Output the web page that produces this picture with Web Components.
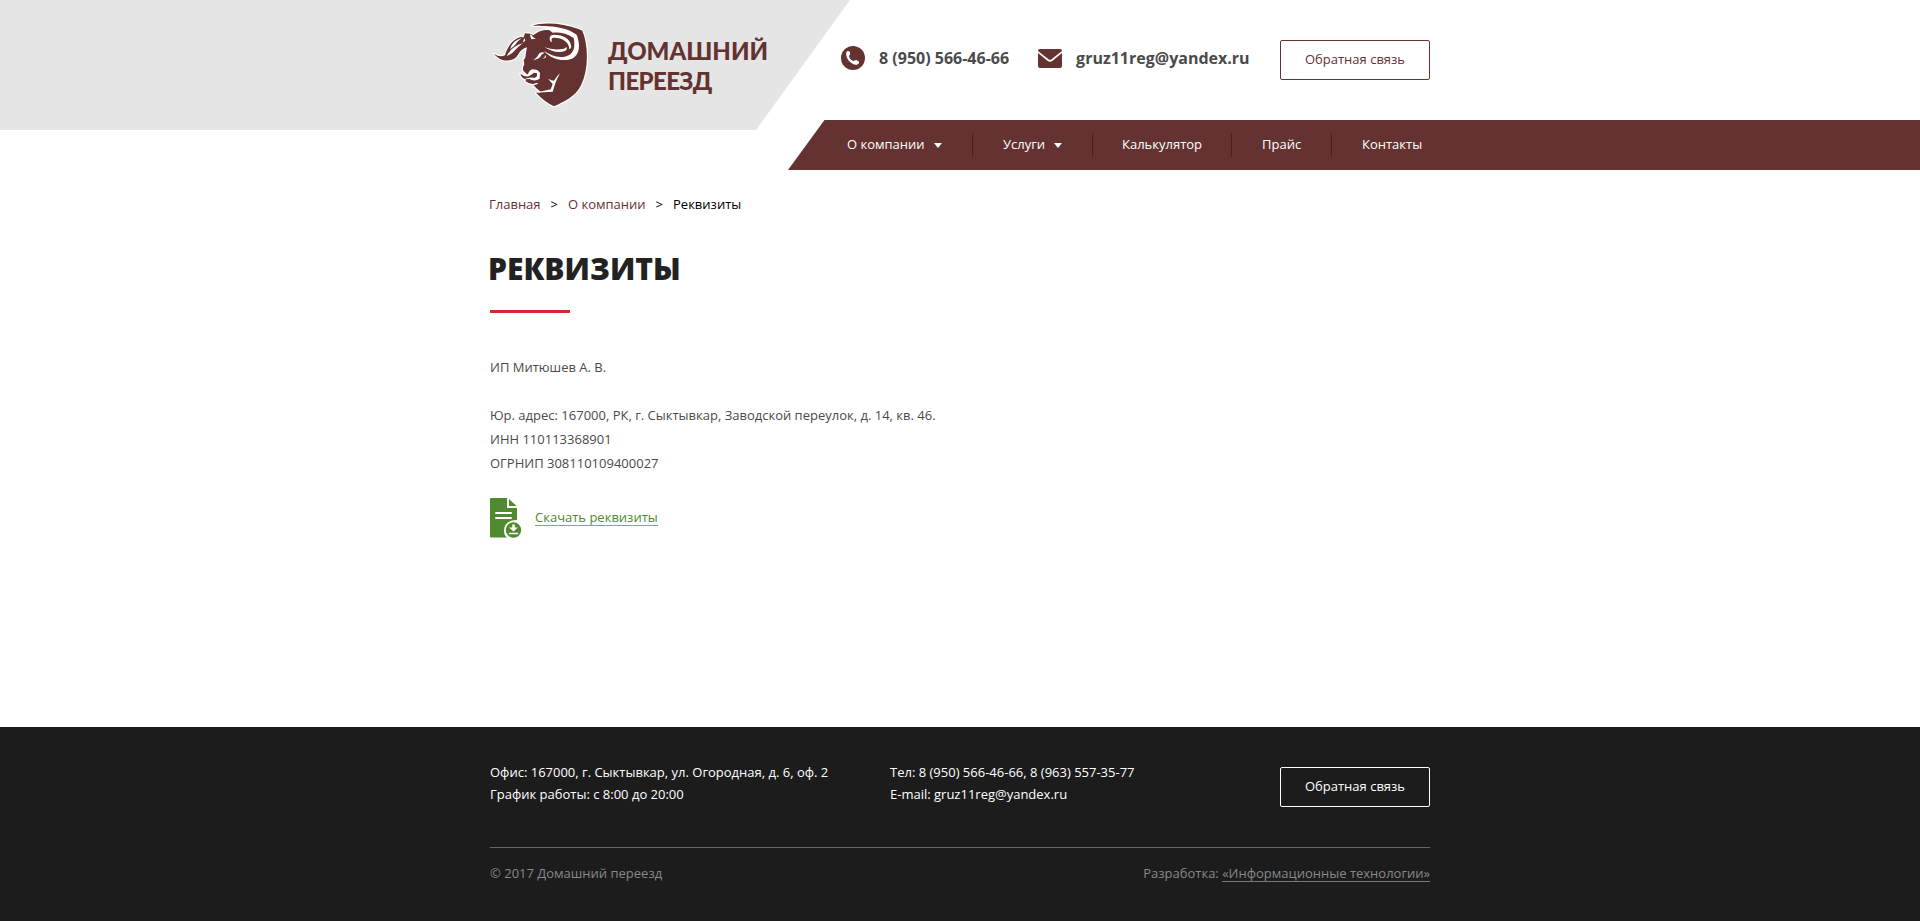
<!DOCTYPE html>
<html lang="ru">
<head>
<meta charset="utf-8">
<title>Реквизиты</title>
<style>
body{margin:0;background:#fff;font:13px/24px "Open Sans","Noto Sans",sans-serif;color:#4a4a4a}
</style>
</head>
<body>
<site-page></site-page>
<script>
const define=(name,html)=>customElements.define(name,class extends HTMLElement{
  constructor(){super();this.attachShadow({mode:'open'}).innerHTML=html;}
});

define('bull-logo',`<style>:host{display:block;width:110px;height:110px}svg{display:block}</style>
<svg width="110" height="110" viewBox="30 0 330 330">
<g fill="#633231" stroke="#fff" stroke-width="7" stroke-linejoin="round" paint-order="stroke">
<path d="M156 47C190 35 250 39 296 57L307 62Q313 75 317 97C325 143 320 190 303 226C287 260 250 277 222 289Q193 275 168 248L184 247Q168 236 158 222Q144 220 136 213L139 209Q124 204 121 192L136 197L142 194L130 182Q127 174 133 163L131 149Q138 145 137 133L141 112Q124 116 114 134C101 157 63 159 42 131Q59 143 75 136C82 110 99 86 124 80L130 83L135 70L152 71L160 76Q183 56 213 61L217 66L222 58C202 46 176 47 156 47Z"/>
</g>
<g fill="#fff">
<path d="M176 48C220 46 264 54 290 74C302 104 300 134 276 146C250 156 212 148 192 122Q216 140 242 141C278 141 288 118 281 84C262 70 238 66 218 68Q200 52 176 48Z"/>
<path d="M211 94Q204 74 222 74C250 74 272 86 274 110Q272 116 268 118C268 96 246 82 220 83Q212 84 216 96Z"/>
<path d="M194 112Q222 122 252 116Q258 114 258 110Q264 116 256 122Q230 134 194 112Z"/>
<path d="M90 118Q96 92 126 84Q110 94 104 106Q98 112 90 118ZM80 138Q96 108 128 100Q112 112 100 126Q92 134 80 138Z"/>
<path d="M154 88Q148 78 152 70Q158 84 168 86ZM133 84L128 98L136 92Z"/>
<path d="M160 150Q172 144 178 130Q186 124 194 128Q184 132 180 142Q172 150 160 150ZM188 146Q196 142 196 134Q202 144 188 146Z"/>
<path d="M121 190Q134 196 144 192Q148 180 158 178L172 180L180 188L179 206Q164 216 148 207L132 208Q150 200 164 204L171 198V190L162 188Q152 196 146 199Q132 202 121 190Z"/>
<path d="M158 222L172 218L174 222L160 226ZM166 248L212 238L218 222L204 206Q216 212 222 212Q230 198 240 190Q230 208 226 220L218 245Z"/>
</g>
</svg>`);

define('site-brand',`<style>
:host{display:flex;align-items:flex-start;height:130px}
.n{margin:36px 0 0 8px;font:900 24px/30px Lato,sans-serif;color:#633231;white-space:nowrap}
.n span{display:block}.b{letter-spacing:-.6px}
bull-logo{margin-top:10px}
</style><bull-logo></bull-logo><div class="n"><span class="a">ДОМАШНИЙ</span><span class="b">ПЕРЕЕЗД</span></div>`);

define('outline-button',`<style>
:host{display:block;box-sizing:border-box;width:150px;height:40px;border:1px solid currentColor;border-radius:2px;text-align:center;line-height:36px;font-size:13px;white-space:nowrap}
</style><slot></slot>`);

define('contact-item',`<style>
:host{display:flex;align-items:center;height:40px;font-weight:700;font-size:16px;line-height:40px;color:#4a4a4a;white-space:nowrap}
::slotted(svg){display:block;margin-right:14px;flex:none}
</style><slot name="icon"></slot><slot></slot>`);

define('nav-item',`<style>
:host{display:flex;align-items:center;height:24px;padding-left:30px;box-sizing:border-box;border-right:1px solid #4f1d1d;color:#fff;white-space:nowrap}
:host([last]){border:0}
span{line-height:22px;height:24px}
i{display:none;margin:1px 0 0 9px;border:4px solid transparent;border-top:5px solid #fff;border-bottom:0}
:host([menu]) i{display:block}
</style><span><slot></slot></span><i></i>`);

define('site-header',`<style>
:host{display:grid;grid-template-columns:490px 298px 1fr;grid-template-rows:120px 50px;height:170px}
.brand{grid-area:1/1/3/3;height:130px;width:850px;box-sizing:border-box;padding-left:490px;background:#e5e5e5;clip-path:polygon(0 0,850px 0,756px 130px,0 130px)}
.top{grid-area:1/3;display:flex;align-items:flex-start;padding:38px 0 0 53px;width:589px}
.top contact-item + contact-item{margin-left:29px}
.top outline-button{margin:2px 0 0 auto;color:#633231}
nav{grid-area:2/3;display:flex;align-items:center;padding-left:29px;background:#633231;clip-path:polygon(36.5px 0,100% 0,100% 100%,0 100%)}
</style>
<div class="brand"><site-brand></site-brand></div>
<div class="top">
<contact-item><svg slot="icon" width="24" height="24" viewBox="0 0 24 24"><circle cx="12" cy="12" r="12" fill="#633231"/><path fill="#fff" d="M5.3 6.2Q6.2 4.8 7.7 5.2L8.7 5.6Q9.6 7.6 9 8.6L8 10Q8.4 13.3 12.2 15.1L14.4 14.2Q15.2 13.8 16.2 14.4L18 15.6Q18.8 17.6 16.4 18.5C11.2 20 4 12.5 5.3 6.2Z"/></svg>8 (950) 566-46-66</contact-item>
<contact-item><svg slot="icon" width="24" height="19" viewBox="0 0 24 19"><path fill="#633231" d="M2 0H22Q24 0 24 2L13.5 10.2Q12 11.2 10.5 10.2L0 2Q0 0 2 0ZM0 4L9.7 12Q12 13.6 14.3 12L24 4V17Q24 19 22 19H2Q0 19 0 17Z"/></svg>gruz11reg@yandex.ru</contact-item>
<outline-button>Обратная связь</outline-button>
</div>
<nav>
<nav-item menu style="width:156px">О компании</nav-item><nav-item menu style="width:120px">Услуги</nav-item><nav-item style="width:139px;padding-left:29px">Калькулятор</nav-item><nav-item style="width:100px">Прайс</nav-item><nav-item last>Контакты</nav-item>
</nav>`);

define('bread-crumbs',`<style>
:host{display:flex;gap:10px;line-height:18px;color:#000}
a{color:#633231}
</style><a>Главная</a><span>&gt;</span><a>О компании</a><span>&gt;</span><span>Реквизиты</span>`);

define('page-title',`<style>
:host{display:block}
h1{margin:0 0 0 -2px;font-size:30px;line-height:40px;font-weight:800;color:#222;white-space:nowrap}
hr{margin:21px 0 0;border:0;width:80px;height:3px;background:#d32b2f}
</style><h1><slot></slot></h1><hr>`);

define('download-link',`<style>
:host{display:flex;align-items:flex-start}
svg{display:block;margin-right:13px}
a{color:#4f8a2f;border-bottom:1px solid #82ad6c;line-height:16px;margin-top:11px}
</style><svg width="32" height="40" viewBox="0 0 32 40"><path fill="#4f8a2f" d="M1 0H17V10H27V22Q14 22 14 33Q14 37 17 39.5H1Q0 39.5 0 38.5V1Q0 0 1 0ZM19 1L26.5 8H19Z"/><path stroke="#fff" stroke-width="2" stroke-linecap="round" d="M6 15H21M6 20H21"/><circle cx="23.5" cy="32" r="7.7" fill="#4f8a2f"/><path fill="#fff" d="M22.2 26.5H24.8V29.5H28L23.5 33.5L19 29.5H22.2Z"/><path fill="none" stroke="#fff" stroke-width="1.6" stroke-linecap="round" d="M19.5 35.5H27.5"/></svg><a><slot></slot></a>`);

define('site-footer',`<style>
:host{display:block;background:#1c1c1c;height:194px;color:#fff}
.w{width:940px;margin:0 auto;padding-top:34px}
.r{display:grid;grid-template-columns:400px 1fr 150px;line-height:22px;height:86px;border-bottom:1px solid #666}
outline-button{margin-top:6px}
.c{display:flex;justify-content:space-between;line-height:18px;padding-top:16px;color:#888}
.c a{display:inline-block;line-height:15px;border-bottom:1px solid #777}
</style><div class="w"><div class="r"><div>Офис: 167000, г. Сыктывкар, ул. Огородная, д. 6, оф. 2<br>График работы: с 8:00 до 20:00</div><div>Тел: 8 (950) 566-46-66, 8 (963) 557-35-77<br>E-mail: gruz11reg@yandex.ru</div><outline-button>Обратная связь</outline-button></div>
<div class="c"><span>© 2017 Домашний переезд</span><span>Разработка: <a>«Информационные технологии»</a></span></div></div>`);

define('site-page',`<style>
:host{display:flex;flex-direction:column;height:921px;overflow:hidden}
main{width:940px;margin:0 auto;flex:1}
bread-crumbs{margin:25px 0 0 -1px}
page-title{margin-top:36px}
.t{margin-top:42px}
download-link{margin-top:23px}
</style><site-header></site-header>
<main><bread-crumbs></bread-crumbs><page-title>РЕКВИЗИТЫ</page-title>
<div class="t">ИП Митюшев А. В.<br><br>Юр. адрес: 167000, РК, г. Сыктывкар, Заводской переулок, д. 14, кв. 46.<br>ИНН 110113368901<br>ОГРНИП 308110109400027</div>
<download-link>Скачать реквизиты</download-link></main>
<site-footer></site-footer>`);
</script>
</body>
</html>
